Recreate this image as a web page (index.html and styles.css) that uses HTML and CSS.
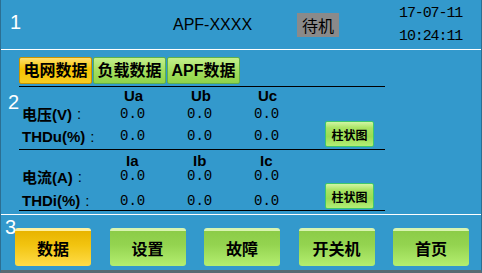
FILE: index.html
```html
<!DOCTYPE html>
<html lang="zh">
<head>
<meta charset="utf-8">
<title>APF</title>
<link rel="stylesheet" href="styles.css">
</head>
<body>
<div class="screen">
  <header class="top">
    <span class="region r1">1</span>
    <div class="title">APF-XXXX</div>
    <div class="state">待机</div>
    <div class="clock">
      <div>17-07-11</div>
      <div>10:24:11</div>
    </div>
  </header>
  <main class="mid">
    <span class="region r2">2</span>
    <nav class="tabs">
      <div class="tab tab-on">电网数据</div>
      <div class="tab">负载数据</div>
      <div class="tab">APF数据</div>
    </nav>
    <div class="table">
      <div class="block b1">
        <div class="cell"></div>
        <div class="cell hd">Ua</div>
        <div class="cell hd">Ub</div>
        <div class="cell hd">Uc</div>
        <div class="cell"></div>
        <div class="cell"></div>

        <div class="cell lbl">电压(V)<span class="colon">:</span></div>
        <div class="cell val">0.0</div>
        <div class="cell val">0.0</div>
        <div class="cell val">0.0</div>
        <div class="cell"></div>
        <div class="cell"></div>

        <div class="cell lbl">THDu(%)<span class="colon">:</span></div>
        <div class="cell val">0.0</div>
        <div class="cell val">0.0</div>
        <div class="cell val">0.0</div>
        <div class="cell btncell"><div class="bar-btn">柱状图</div></div>
        <div class="cell"></div>
      </div>
      <div class="block b2">
        <div class="cell"></div>
        <div class="cell hd">Ia</div>
        <div class="cell hd">Ib</div>
        <div class="cell hd">Ic</div>
        <div class="cell"></div>
        <div class="cell"></div>

        <div class="cell lbl">电流(A)<span class="colon">:</span></div>
        <div class="cell val">0.0</div>
        <div class="cell val">0.0</div>
        <div class="cell val">0.0</div>
        <div class="cell"></div>
        <div class="cell"></div>

        <div class="cell lbl">THDi(%)<span class="colon">:</span></div>
        <div class="cell val">0.0</div>
        <div class="cell val">0.0</div>
        <div class="cell val">0.0</div>
        <div class="cell btncell"><div class="bar-btn">柱状图</div></div>
        <div class="cell"></div>
      </div>
    </div>
  </main>
  <footer class="bottom">
    <span class="region r3">3</span>
    <div class="nbtn nbtn-on">数据</div>
    <div class="nbtn">设置</div>
    <div class="nbtn">故障</div>
    <div class="nbtn">开关机</div>
    <div class="nbtn">首页</div>
  </footer>
</div>
</body>
</html>
```
FILE: styles.css
```css
html, body {
  margin: 0;
  padding: 0;
  background: #3399cc;
}
.screen {
  position: relative;
  width: 480px;
  height: 270px;
  background: #3399cc;
  border-left: 1px solid #2c6f92;
  border-right: 1px solid #2c6f92;
  border-bottom: 3px solid #5a6a72;
  font-family: "Liberation Sans", "Noto Sans CJK SC", sans-serif;
  color: #000;
}
.region {
  position: absolute;
  color: #fff;
  font-family: "Liberation Sans", sans-serif;
  font-size: 20px;
  line-height: 20px;
}
.r1 { left: 9px; top: 12px; }
.r2 { left: 7px; top: 42px; }
.r3 { left: 4px; top: 2px; }

.top {
  position: relative;
  height: 50px;
  border-bottom: 1px solid #ffffff;
  display: flex;
  align-items: center;
  padding-left: 172px;
  box-sizing: border-box;
}
.title {
  font-size: 16px;
  margin-top: 1px;
  width: 124px;
}
.state {
  width: 42px;
  height: 24px;
  background: #8a8a8a;
  font-family: "Noto Sans CJK SC", sans-serif;
  font-size: 16px;
  line-height: 24px;
  text-align: center;
  margin-top: 1px;
}
.clock {
  margin-left: 60px;
  font-family: "Liberation Mono", monospace;
  font-size: 15px;
  letter-spacing: -1.1px;
  line-height: 23px;
  margin-top: 1px;
}

.mid {
  position: relative;
  height: 165px;
  border-bottom: 1px solid #ffffff;
  box-sizing: border-box;
  padding: 7px 0 0 18px;
}
.tabs {
  display: flex;
  gap: 1px;
  height: 27px;
}
.tab {
  width: 71px;
  height: 25px;
  border: 1px solid #5fb04a;
  border-radius: 2px;
  background: linear-gradient(#c4f08c, #a2de5c 55%, #8fd448);
  font-family: "Liberation Sans", "Noto Sans CJK SC", sans-serif;
  font-weight: bold;
  font-size: 16px;
  line-height: 26px;
  text-align: center;
}
.tab-on {
  border-color: #c89400;
  background: linear-gradient(#ffe070, #f6c400 45%, #f8cc20);
}
.table {
  width: 366px;
  margin-top: 2px;
  border-top: 1px solid #000;
}
.block {
  display: grid;
  grid-template-columns: 101px 67px 67px 71px 49px 11px;
  border-bottom: 1px solid #000;
}
.b1 { grid-template-rows: 17px 17px 28px; }
.b2 { grid-template-rows: 19px 14px 27px; }
.cell {
  display: flex;
  align-items: center;
  white-space: nowrap;
}
.hd {
  font-weight: bold;
  font-size: 15px;
  padding-left: 4px;
}
.b2 .hd {
  align-items: flex-end;
  padding-left: 6px;
}
.lbl {
  font-weight: bold;
  font-size: 15px;
  padding-left: 3px;
}
.colon {
  font-weight: normal;
  margin-left: 5px;
}
.val {
  font-family: "Liberation Mono", monospace;
  font-size: 14px;
  letter-spacing: 0;
}
.b1 .lbl, .b1 .val { padding-top: 2px; }
.b2 .cell:nth-child(n+13).lbl,
.b2 .cell:nth-child(n+13).val {
  align-items: flex-end;
  padding-bottom: 1px;
}
.btncell {
  align-items: flex-start;
}
.bar-btn {
  width: 47px;
  height: 24px;
  border: 1px solid #3fc86a;
  border-radius: 2px;
  background: linear-gradient(#d2f6a4, #a8e464 25%, #98dc52 60%, #b4ee76);
  font-family: "Noto Sans CJK SC", sans-serif;
  font-size: 12px;
  font-weight: bold;
  line-height: 25px;
  text-align: center;
}

.bottom {
  position: relative;
  height: 53px;
  box-sizing: border-box;
  padding: 13px 0 0 14px;
  display: flex;
  gap: 18.5px;
  align-items: flex-start;
}
.nbtn {
  width: 76px;
  height: 38px;
  box-sizing: border-box;
  border-radius: 3px;
  border-top: 3px solid #d8f4b0;
  background: linear-gradient(#8ccc48, #94d450 40%, #b4ee70);
  font-family: "Noto Sans CJK SC", sans-serif;
  font-weight: bold;
  font-size: 16px;
  line-height: 34px;
  text-align: center;
}
.nbtn-on {
  border-top-color: #fff0a0;
  background: linear-gradient(#e8b400, #f2c410 40%, #ffdc48);
}
```
